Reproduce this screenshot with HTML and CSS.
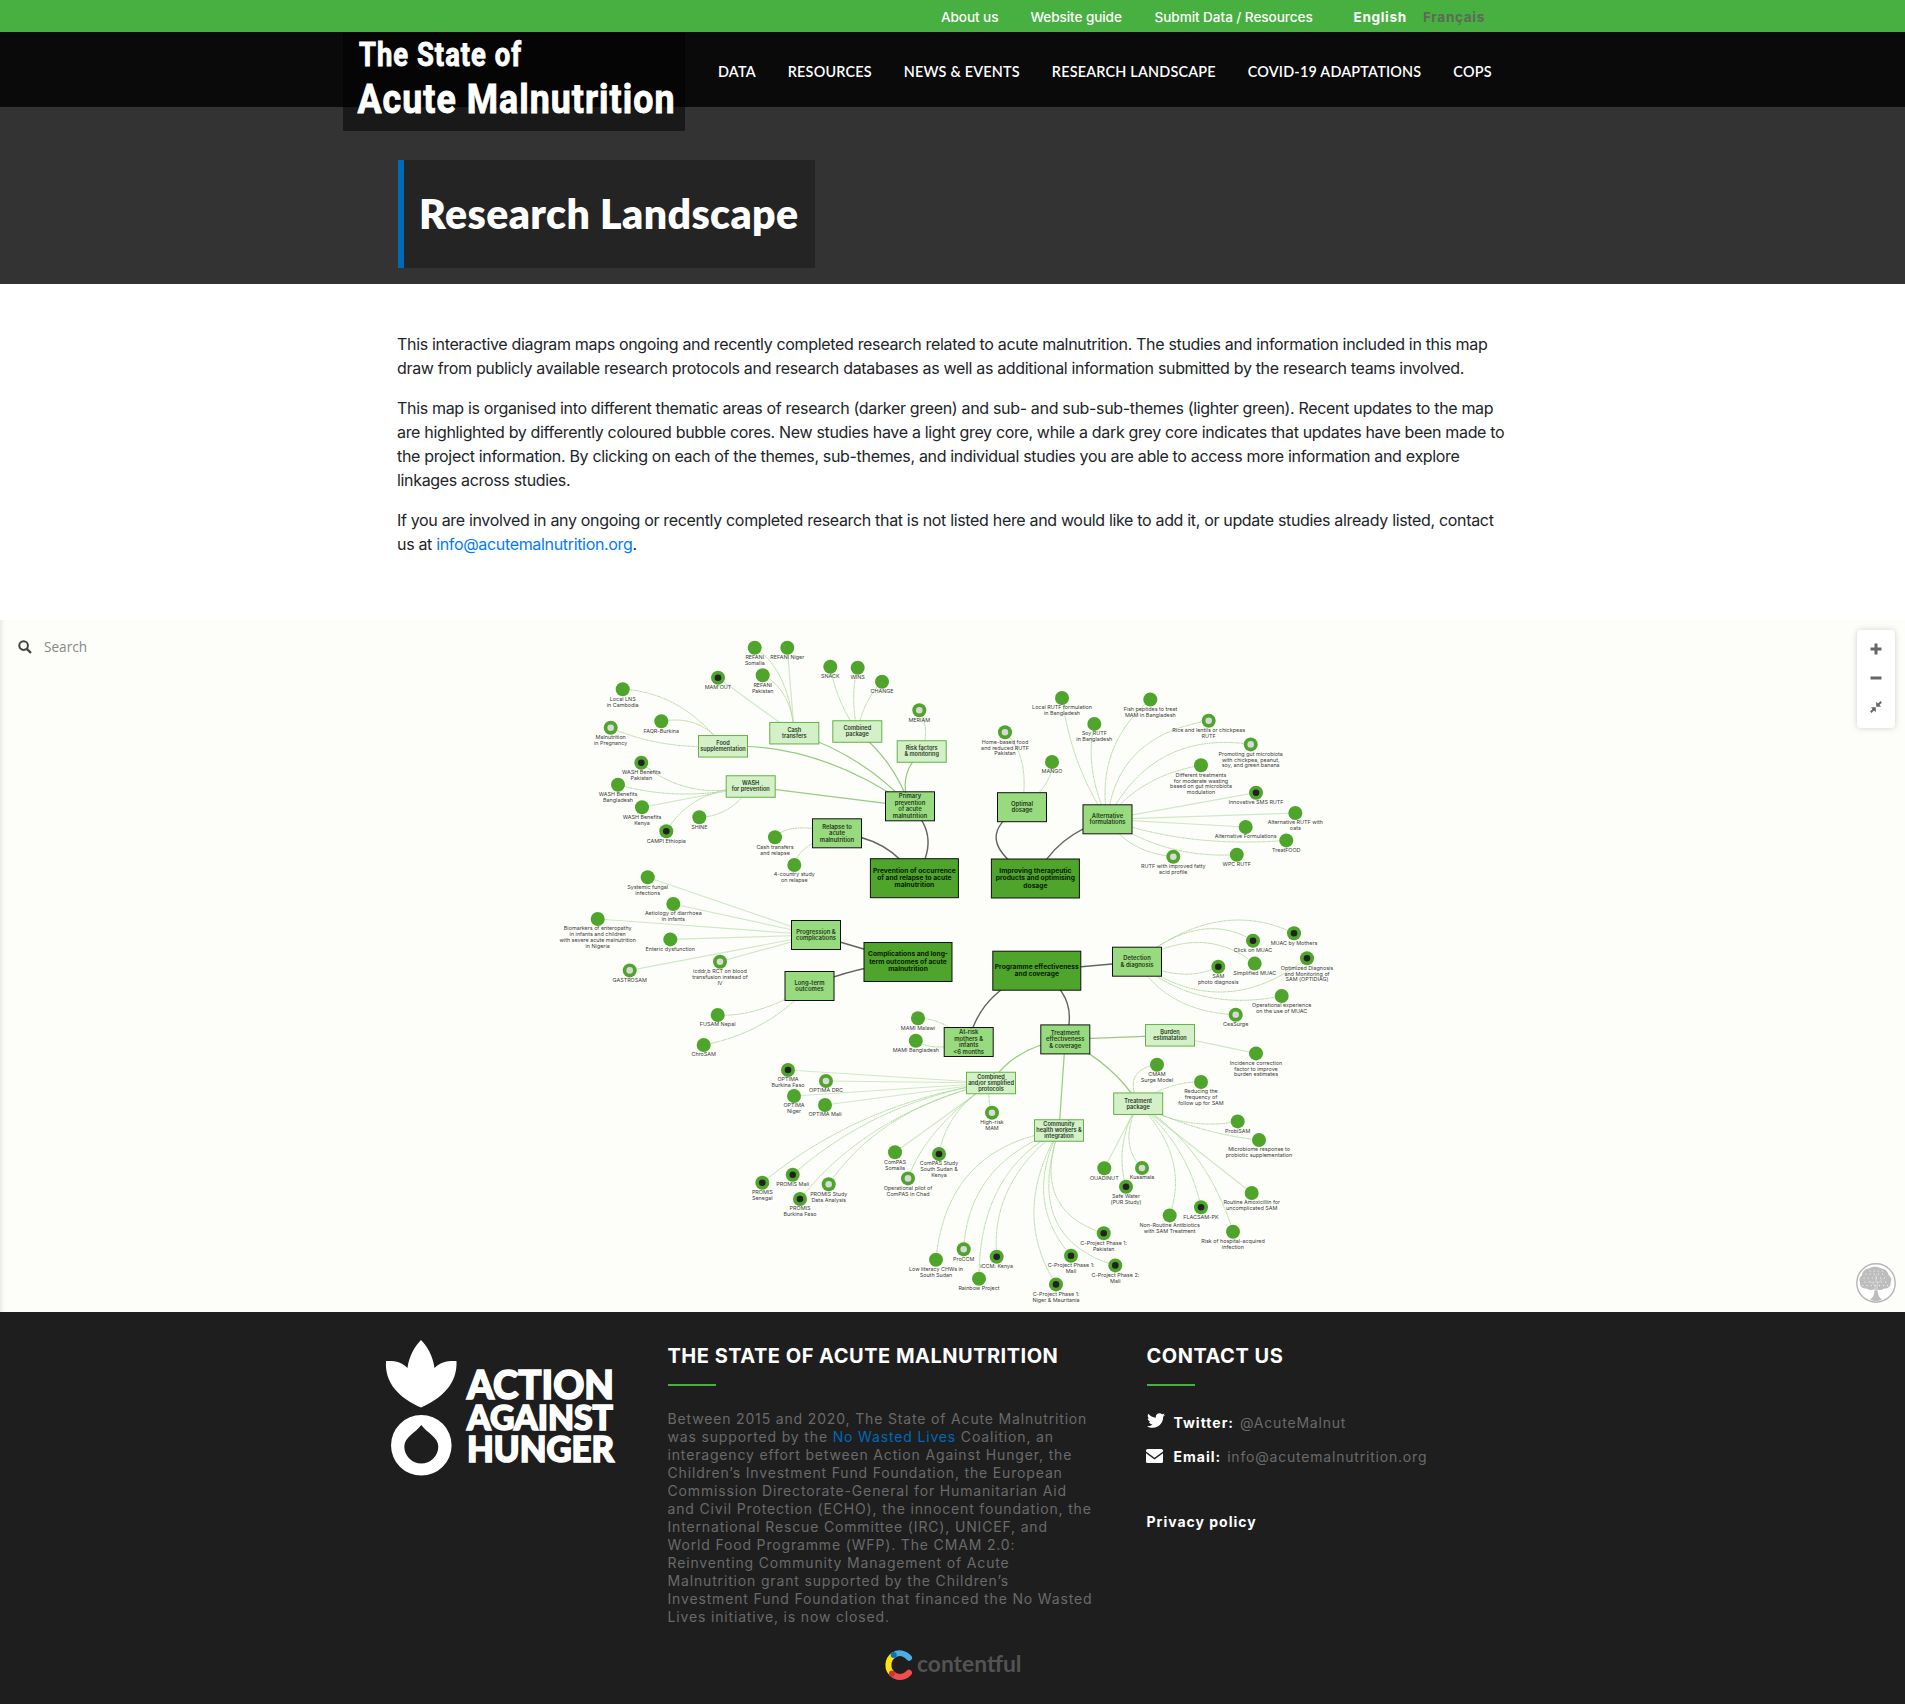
FILE: index.html
```html
<!DOCTYPE html>
<html lang="en">
<head>
<meta charset="utf-8">
<title>Research Landscape</title>
<link rel="stylesheet" href="styles.css">
</head>
<body>
<div class="topbar">
  <nav class="topbar-links">
    <a class="t-about">About us</a><a class="t-guide">Website guide</a><a class="t-submit">Submit Data / Resources</a>
    <a class="lang active">English</a><a class="lang other">Français</a>
  </nav>
</div>
<header class="header">
  <svg class="brand" width="342" height="99" viewBox="0 0 342 99" role="img">
    <text x="16" y="33.5" font-size="32.5" textLength="163" lengthAdjust="spacingAndGlyphs">The State of</text>
    <text x="14.500" y="80.5" font-size="41" textLength="318" lengthAdjust="spacingAndGlyphs">Acute Malnutrition</text>
  </svg>
  <nav class="main-nav">
    <a>DATA</a><a>RESOURCES</a><a>NEWS &amp; EVENTS</a><a>RESEARCH LANDSCAPE</a><a>COVID-19 ADAPTATIONS</a><a>COPS</a>
  </nav>
</header>
<section class="hero"><h1>Research Landscape</h1></section>
<section class="intro">
  <p>This interactive diagram maps ongoing and recently completed research related to acute malnutrition. The studies and information included in this map<br>draw from publicly available research protocols and research databases as well as additional information submitted by the research teams involved.</p>
  <p>This map is organised into different thematic areas of research (darker green) and sub- and sub-sub-themes (lighter green). Recent updates to the map<br>are highlighted by differently coloured bubble cores. New studies have a light grey core, while a dark grey core indicates that updates have been made to<br>the project information. By clicking on each of the themes, sub-themes, and individual studies you are able to access more information and explore<br>linkages across studies.</p>
  <p>If you are involved in any ongoing or recently completed research that is not listed here and would like to add it, or update studies already listed, contact<br>us at <a>info@acutemalnutrition.org</a>.</p>
</section>
<section class="map">
  <svg id="graph" class="graph" width="1905" height="692" viewBox="0 0 1905 692"></svg>
  <div class="search">
    <svg width="14" height="14" viewBox="0 0 14 14"><circle cx="5.6" cy="5.6" r="4.3" fill="none" stroke="#444" stroke-width="2"/><path d="M8.8 8.8L13 13" stroke="#444" stroke-width="2.4"/></svg>
    <span>Search</span>
  </div>
  <div class="zoom">
    <svg width="12" height="12" viewBox="0 0 12 12"><path d="M6 .5v11M.5 6h11" stroke="#666" stroke-width="3"/></svg>
    <svg width="12" height="12" viewBox="0 0 12 12"><path d="M.5 6h11" stroke="#666" stroke-width="3"/></svg>
    <svg width="12" height="12" viewBox="0 0 12 12"><path d="M.8 11.2L4 8M11.2.8L8 4" stroke="#666" stroke-width="2"/><path d="M5.8 6.2v5L.9 6.2zM6.2 5.8v-5l4.9 5z" fill="#666"/></svg>
  </div>
  <svg class="tree" width="40" height="40" viewBox="0 0 40 40">
    <circle cx="20" cy="20" r="19.2" fill="#fff" stroke="#b5b5b5" stroke-width="1.4"/>
    <path fill="#bdbdbd" d="M18.500 26c-3 1.500-6 1-8-.5-4 .5-7-2-6.500-6-1.500-3 0-6 2-7 0-4 4-7 7-7 3-2.500 9-2.500 12 0 4 0 7 3 7.500 6.500 3 2 3.500 5 2 8 .5 4-3 6-6.500 5.500-2 1.500-4 2-6.500 1 .3 4 .8 7.500 4.500 10-4 2.200-8 2.200-12 0 4-2.500 4.500-6 4.500-10.500z"/>
    <path fill="none" stroke="#e2e2e2" stroke-width=".7" d="M19.300 28l-.5-6-5-4M20.800 28l.5-7 5-5M20 20V12"/>
    <path fill="none" stroke="#fff" stroke-width="1.100" stroke-linecap="round" stroke-dasharray=".1 4" d="M8 15h24M9 19h24M10 11h20M7 22.500h26M14 8h14"/>
  </svg>
</section>
<footer class="footer">
  <div class="cols">
    <div class="col-logo">
      <svg width="240" height="150" viewBox="0 0 240 150" role="img">
        <g fill="#fff">
          <path d="M39 8c6 6 12 16 13.500 28C58 30 66 28.500 74.500 29 75.500 52 60 66 39 75.500 18 66 2.500 52 4 29c8.500-.5 16 1 21.500 7C27 24 33 14 39 8z"/>
          <path fill-rule="evenodd" d="M39.300 83a30.300 30.300 0 1 1 0 60.600 30.300 30.300 0 0 1 0-60.600zM39.300 93c-6 8-17 12-17 21.500a17 17 0 0 0 34 0C56.300 105 45 101 39.300 93z"/>
        </g>
        <g class="aah">
          <text x="85" y="66.800" font-size="39" textLength="147" lengthAdjust="spacingAndGlyphs">ACTION</text>
          <text x="85" y="97.800" font-size="34" textLength="146" lengthAdjust="spacingAndGlyphs">AGAINST</text>
          <text x="85" y="130.300" font-size="35.500" textLength="147" lengthAdjust="spacingAndGlyphs">HUNGER</text>
        </g>
      </svg>
    </div>
    <div class="col-about">
      <h2>THE STATE OF ACUTE MALNUTRITION</h2>
      <p>Between 2015 and 2020, The State of Acute Malnutrition<br>was supported by the <a>No Wasted Lives</a> Coalition, an<br>interagency effort between Action Against Hunger, the<br>Children’s Investment Fund Foundation, the European<br>Commission Directorate-General for Humanitarian Aid<br>and Civil Protection (ECHO), the innocent foundation, the<br>International Rescue Committee (IRC), UNICEF, and<br>World Food Programme (WFP). The CMAM 2.0:<br>Reinventing Community Management of Acute<br>Malnutrition grant supported by the Children’s<br>Investment Fund Foundation that financed the No Wasted<br>Lives initiative, is now closed.</p>
    </div>
    <div class="col-contact">
      <h2>CONTACT US</h2>
      <div class="contact"><svg width="18" height="15" viewBox="0 0 512 416"><path fill="#fff" d="M459 104c.3 4.500.3 9 .3 13.600C459.300 256 353.700 416 161 416 101.500 416 46.300 398.700 0 368.700c8.400 1 16.600 1.300 25.300 1.300 49 0 94.200-16.600 130.300-44.800-46-1-84.800-31.200-98-72.800 6.500 1 13 1.600 19.800 1.600 9.400 0 18.800-1.300 27.600-3.600C57 240.700 20.800 198.500 20.800 147.500v-1.300c14 7.800 30.200 12.700 47.400 13.300C40 140.700 21.400 108.500 21.400 72.100c0-19.500 5.200-37.400 14.300-53C87.400 82.800 165 124.400 252 129c-1.600-7.800-2.600-15.900-2.600-24C249.400 47 296.200 0 354.400 0c30.200 0 57.500 12.700 76.700 33.100 23.700-4.500 46.500-13.300 66.600-25.300-7.800 24.400-24.400 44.800-46.100 57.800 21-2.300 41.600-8.100 60.400-16.200-14.300 20.800-32.200 39.300-53 54.600z"/></svg><b>Twitter:</b> <span>@AcuteMalnut</span></div>
      <div class="contact mail"><svg width="17" height="14" viewBox="0 0 17 14"><path fill="#fff" d="M1.500 0h14A1.500 1.500 0 0 1 17 1.500v1L8.500 8.700 0 2.500v-1A1.500 1.500 0 0 1 1.500 0zM0 4.200l8.500 6.300L17 4.200v8.300a1.500 1.500 0 0 1-1.500 1.500h-14A1.500 1.500 0 0 1 0 12.500z"/></svg><b>Email:</b> <span>info@acutemalnutrition.org</span></div>
      <div class="privacy">Privacy policy</div>
    </div>
  </div>
  <svg class="contentful" width="142" height="32" viewBox="0 0 142 32">
    <g fill="none" stroke-width="6" stroke-linecap="round">
      <path stroke="#4fade1" d="M9.500 6.200C14.500 2.800 20.500 4 25 8.800"/>
      <path stroke="#ee4f4a" d="M8 24.500C12.500 29.500 20.500 29 25 23.700"/>
      <path stroke="#ffe30d" stroke-linecap="butt" d="M9.500 6.200C3 11 3 20 8 24.500"/>
    </g>
    <circle cx="9.700" cy="6" r="3" fill="#0474b4"/><circle cx="8" cy="24.500" r="3" fill="#c6373c"/>
    <text x="33" y="22.800" font-size="23" textLength="104.500" lengthAdjust="spacingAndGlyphs">contentful</text>
  </svg>
</footer>
<script src="graph.js"></script>
</body>
</html>
```
FILE: graph.js
```js
// Boxes: id -> [centre x, centre y, level, label]
const boxes = {
  prev: [914.4, 258.2, 'main', 'Prevention of occurrence|of and relapse to acute|malnutrition'],
  impr: [1035.4, 258.5, 'main', 'Improving therapeutic|products and optimising|dosage'],
  comp: [908, 342, 'main', 'Complications and long-|term outcomes of acute|malnutrition'],
  prog: [1036.8, 350.7, 'main', 'Programme effectiveness|and coverage'],
  primary: [910, 186.3, 'theme', 'Primary|prevention|of acute|malnutrition'],
  relapse: [837, 213.3, 'theme', 'Relapse to|acute|malnutrition'],
  optimal: [1022, 187.2, 'theme', 'Optimal|dosage'],
  alt: [1107.5, 199.3, 'theme', 'Alternative|formulations'],
  progress: [816, 315, 'theme', 'Progression &|complications'],
  longterm: [809.5, 366, 'theme', 'Long-term|outcomes'],
  detect: [1137, 341.7, 'theme', 'Detection|& diagnosis'],
  atrisk: [968.7, 422, 'theme', 'At-risk|mothers &|infants|<6 months'],
  treat: [1065.3, 419.4, 'theme', 'Treatment|effectiveness|& coverage'],
  food: [723, 126.3, 'sub', 'Food|supplementation'],
  cash: [794.3, 113.2, 'sub', 'Cash|transfers'],
  combo: [857.3, 111.5, 'sub', 'Combined|package'],
  risk: [921.7, 131.5, 'sub', 'Risk factors|& monitoring'],
  wash: [750.7, 166.5, 'sub', 'WASH|for prevention'],
  burden: [1170, 415.3, 'sub', 'Burden|estimatation'],
  simpl: [991, 463, 'sub', 'Combined|and/or simplified|protocols'],
  pack: [1138.2, 483.7, 'sub', 'Treatment|package'],
  chw: [1059, 510.5, 'sub', 'Community|health workers &|integration']
};

// Studies: [x, y, core, parent, label, curve mid-point x, y]
const studies = [
  [754.7, 27.7, '', 'cash', 'REFANI|Somalia', 781.7, 60],
  [787.3, 27.7, '', 'cash', 'REFANI Niger'],
  [718, 57.7, 'dark', 'cash', "MAM'OUT"],
  [762.7, 55.3, '', 'cash', 'REFANI|Pakistan', 785, 76.7],
  [830.3, 46.7, '', 'combo', 'SNACK', 840, 80],
  [857.7, 47.7, '', 'combo', 'WINS', 853.7, 77],
  [882, 61.7, '', 'combo', 'CHANGE', 866.7, 83],
  [919.3, 90.3, 'light', 'risk', 'MERIAM', 925.5, 110],
  [622.7, 69.3, '', 'food', 'Local LNS|in Cambodia', 677, 85],
  [661.3, 101.3, '', 'food', 'FAQR-Burkina', 696.7, 104],
  [610.7, 107.7, 'light', 'food', 'Malnutrition|in Pregnancy', 663.3, 123.3],
  [641.3, 142.7, 'dark', 'wash', 'WASH Benefits|Pakistan', 691, 168],
  [618, 164.7, '', 'wash', 'WASH Benefits|Bangladesh', 682, 174],
  [642, 187.3, '', 'wash', 'WASH Benefits|Kenya'],
  [666.3, 211.3, 'dark', 'wash', 'CAMPI Ethiopia', 700, 179],
  [699.3, 197.3, '', 'wash', 'SHINE', 728, 189],
  [775, 217.3, '', 'relapse', 'Cash transfers|and relapse', 798, 208],
  [794.3, 245, '', 'relapse', '4-country study|on relapse', 807, 227],
  [647.7, 257.3, '', 'progress', 'Systemic fungal|infections'],
  [1005, 112.3, 'light', 'optimal', 'Home-based food|and reduced RUTF|Pakistan', 1022, 143],
  [1052, 142, '', 'optimal', 'MANGO', 1045, 165],
  [1062, 78, '', 'alt', 'Local RUTF formulation|in Bangladesh', 1078.3, 143.3],
  [1094.3, 103.9, '', 'alt', 'Soy RUTF|in Bangladesh', 1092.5, 150],
  [1150.3, 79.5, '', 'alt', 'Fish peptides to treat|MAM in Bangladesh', 1111.7, 133.3],
  [1208.7, 100.7, 'light', 'alt', 'Rice and lentils or chickpeas|RUTF', 1137, 133],
  [1250.7, 124.4, 'light', 'alt', 'Promoting gut microbiota|with chickpea, peanut,|soy, and green banana', 1166, 136],
  [1201, 145.3, '', 'alt', 'Different treatments|for moderate wasting|based on gut microbiota|modulation', 1147, 164],
  [1256, 172.7, 'dark', 'alt', 'Innovative SMS RUTF'],
  [1295.3, 193, '', 'alt', 'Alternative RUTF with|oats'],
  [1245.7, 207, '', 'alt', 'Alternative Formulations'],
  [1286.3, 220.4, '', 'alt', 'TreatFOOD', 1192, 219],
  [1236.8, 234.7, '', 'alt', 'WPC RUTF', 1169, 228],
  [1173.3, 236.7, 'light', 'alt', 'RUTF with improved fatty|acid profile', 1134, 225],
  [673.3, 284, '', 'progress', 'Aetiology of diarrhoea|in infants'],
  [597.7, 299, '', 'progress', 'Biomarkers of enteropathy|in infants and children|with severe acute malnutrition|in Nigeria'],
  [670.3, 319.4, '', 'progress', 'Enteric dysfunction'],
  [629.7, 350.4, 'light', 'progress', 'GASTROSAM'],
  [720, 341.7, 'light', 'progress', 'icddr,b RCT on blood|transfusion instead of|IV'],
  [717.7, 395, '', 'longterm', 'FUSAM Nepal', 761, 389],
  [703.7, 425, '', 'longterm', 'ChroSAM', 762, 404],
  [918, 398.3, '', 'atrisk', 'MAMI Malawi', 943, 404],
  [915.8, 420.8, '', 'atrisk', 'MAMI Bangladesh', 938, 427],
  [788, 450, 'dark', 'simpl', 'OPTIMA|Burkina Faso'],
  [826, 461, 'light', 'simpl', 'OPTIMA DRC'],
  [794, 476, '', 'simpl', 'OPTIMA|Niger'],
  [825, 485, '', 'simpl', 'OPTIMA Mali'],
  [1294, 313.3, 'dark', 'detect', 'MUAC by Mothers', 1217, 302],
  [1253, 320.7, 'dark', 'detect', 'Click on MUAC', 1198, 310],
  [1254.7, 343.6, '', 'detect', 'Simplified MUAC', 1199, 322.5],
  [1307, 338.3, 'dark', 'detect', 'Optimized Diagnosis|and Monitoring of|SAM (OPTIDIAG)', 1222, 372],
  [1218.3, 346.7, 'dark', 'detect', 'SAM|photo diagnosis', 1181, 354],
  [1281.7, 376, '', 'detect', 'Operational experience|on the use of MUAC', 1203, 376],
  [1235.7, 394.7, 'light', 'detect', 'CeaSurge', 1177, 380],
  [1256, 433.4, '', 'burden', 'Incidence correction|factor to improve|burden estimates'],
  [1157, 444.7, '', 'pack', 'CMAM|Surge Model', 1135, 457],
  [1201, 462, '', 'pack', 'Reducing the|frequency of|follow up for SAM', 1169, 467],
  [992, 492.7, 'light', 'simpl', 'High-risk|MAM', 989, 478],
  [895, 532.3, '', 'simpl', 'ComPAS|Somalia'],
  [939, 534, 'dark', 'simpl', 'ComPAS Study|South Sudan &|Kenya', 956, 494],
  [908, 558.4, 'light', 'simpl', 'Operational pilot of|ComPAS in Chad', 938, 509],
  [762.3, 562.7, 'dark', 'simpl', 'PROMIS|Senegal', 868, 498],
  [792.7, 554.7, 'dark', 'simpl', 'PROMIS Mali', 884, 495],
  [828.7, 564.3, 'light', 'simpl', 'PROMIS Study|Data Analysis', 895, 501],
  [800, 579, 'dark', 'simpl', 'PROMIS|Burkina Faso', 882, 507],
  [936, 639.7, '', 'chw', 'Low literacy CHWs in|South Sudan', 972, 551],
  [963.7, 629.3, 'light', 'chw', 'ProCCM', 990, 556],
  [979, 658.7, '', 'chw', 'Rainbow Project', 999, 568],
  [996.7, 636.7, 'dark', 'chw', 'iCCM: Kenya', 1009, 568],
  [1237.7, 501.4, '', 'pack', 'ProbiSAM', 1186, 502],
  [1259, 520, '', 'pack', 'Microbiome response to|probiotic supplementation', 1197, 507.5],
  [1104.3, 548.3, '', 'pack', 'OUADINUT'],
  [1142, 548, 'light', 'pack', 'Kusamala', 1129, 520],
  [1126, 566.7, 'dark', 'pack', 'Safe Water|(PUR Study)', 1123, 525],
  [1169.7, 595.4, '', 'pack', 'Non-Routine Antibiotics|with SAM Treatment', 1172, 538],
  [1201, 587.3, 'dark', 'pack', 'FLACSAM-PK', 1179, 531],
  [1251.7, 573, '', 'pack', 'Routine Amoxicillin for|uncomplicated SAM'],
  [1233, 611.7, '', 'pack', 'Risk of hospital-acquired|infection', 1196, 537],
  [1103.7, 613.3, 'dark', 'chw', 'C-Project Phase 1:|Pakistan', 1056, 576],
  [1071, 635.7, 'dark', 'chw', 'C-Project Phase 1:|Mali', 1044, 577],
  [1115.3, 645.4, 'dark', 'chw', 'C-Project Phase 2:|Mali', 1055, 598],
  [1056, 664.4, 'dark', 'chw', 'C-Project Phase 1:|Niger & Mauritania', 1034, 590]
];

// Links between boxes: [from, to, mid-point x, y]
const links = [
  ['prev', 'primary', 928, 220], ['prev', 'relapse', 883.3, 226.7],
  ['impr', 'optimal', 996.5, 221], ['impr', 'alt', 1063.3, 221.7],
  ['comp', 'progress'], ['comp', 'longterm', 858, 350],
  ['prog', 'detect'], ['prog', 'atrisk', 991, 379], ['prog', 'treat', 1066, 380],
  ['primary', 'food', 817, 139], ['primary', 'cash', 856.7, 141.7],
  ['primary', 'combo', 889, 145], ['primary', 'risk', 906, 157],
  ['primary', 'wash'], ['treat', 'burden'], ['treat', 'simpl', 1021, 434],
  ['treat', 'chw'], ['treat', 'pack', 1109, 449]
];

const size = { main: [88, 39], theme: [49, 29], sub: [49, 21.5] };
const textStep = { main: 7.4, theme: 6.5, sub: 6 };
const esc = s => s.replace(/&/g, '&amp;').replace(/</g, '&lt;');

function path(a, b, mx, my, cls) {
  if (mx === undefined) return `<path class="edge ${cls} straight" d="M${a[0]} ${a[1]}L${b[0]} ${b[1]}"/>`;
  const cx = 2 * mx - (a[0] + b[0]) / 2, cy = 2 * my - (a[1] + b[1]) / 2;
  return `<path class="edge ${cls}" d="M${a[0]} ${a[1]}Q${cx} ${cy} ${b[0]} ${b[1]}"/>`;
}
function lines(label, x, y, step, cls) {
  return label.split('|').map((t, i) =>
    `<text class="${cls}" x="${x}" y="${y + i * step}">${esc(t)}</text>`).join('');
}

let out = '';
for (const s of studies) out += path(s, boxes[s[3]], s[5], s[6], 'leaf');
for (const l of links) out += path(boxes[l[0]], boxes[l[1]], l[2], l[3], boxes[l[0]][2]);
for (const b of Object.values(boxes)) {
  const [w, h] = size[b[2]], step = textStep[b[2]], n = b[3].split('|').length;
  out += `<rect class="box ${b[2]}" x="${b[0] - w / 2}" y="${b[1] - h / 2}" width="${w}" height="${h}"/>`;
  out += lines(b[3], b[0], b[1] - (n - 1) * step / 2 + 1.8, step, 'box-label ' + b[2]);
}
for (const s of studies) {
  out += `<circle class="study" cx="${s[0]}" cy="${s[1]}" r="7"/>`;
  if (s[2]) out += `<circle class="core ${s[2]}" cx="${s[0]}" cy="${s[1]}" r="3.3"/>`;
  out += lines(s[4], s[0], s[1] + 11.4, 5.8, 'label');
}
document.getElementById('graph').innerHTML = out;
```
FILE: styles.css
```css
* { box-sizing: border-box; }
body { margin: 0; background: #fff; font-family: Inter, "Liberation Sans", sans-serif; color: #212529; }
h1, h2, p { margin: 0; }

.topbar { height: 32px; background: #48b040; padding-left: 941px; }
.topbar-links { display: flex; align-items: center; height: 34px; color: #fff; font-size: 13.6px; font-weight: 500; white-space: nowrap; }
.topbar-links a { flex: none; }
.t-about { width: 89.5px; letter-spacing: -.1px; }
.t-guide { width: 124px; letter-spacing: -.1px; }
.t-submit { width: 199px; letter-spacing: -.07px; }
.lang { font-weight: 700; letter-spacing: .65px; }
.lang.active { width: 69.5px; }
.lang.other { color: #5c6b5a; }

.header { height: 75px; background: #0a0a0a; display: flex; padding-left: 343px; position: relative; }
.brand { flex: none; background: rgba(0, 0, 0, .5); }
.brand text { font-family: Roboto, sans-serif; font-weight: 700; letter-spacing: 1.2px; fill: #fff; stroke: #fff; stroke-width: .9; }
.main-nav { display: flex; gap: 32px; padding: 0 0 0 33px; height: 79px; align-items: center; color: #fff; font: 600 14.4px Lato, sans-serif; letter-spacing: .2px; white-space: nowrap; }

.hero { height: 177px; background: #333; padding: 53px 0 0 398px; }
.hero h1 { width: 417px; height: 108px; background: #242424; border-left: 6px solid #0069b8; padding-left: 15px; font: 800 41px/108px Lato, sans-serif; letter-spacing: .42px; color: #fff; white-space: nowrap; }

.intro { height: 336px; padding: 48px 0 0 397px; font-size: 16px; line-height: 24px; letter-spacing: -.33px; white-space: nowrap; }
.intro p { margin-bottom: 16px; }
.intro a { color: #007bff; }

.map { position: relative; height: 692px; background: #fdfef9; box-shadow: inset 5px 0 5px -4px rgba(0, 0, 0, .12); }
.graph { display: block; }
.edge { fill: none; }
.edge.leaf { stroke: #a9d498; stroke-width: .9; stroke-dasharray: 2 .5; }
.edge.leaf.straight { stroke: #d0e8c6; stroke-width: 1.2; stroke-dasharray: none; }
.edge.main { stroke: #636363; stroke-width: 1.4; }
.edge.theme { stroke: #94cb82; stroke-width: 1.2; }
.box { stroke-width: 1; }
.box.main { fill: #4fa52b; stroke: #111; }
.box.theme { fill: #98da7e; stroke: #111; }
.box.sub { fill: #d4f0c9; stroke: #62b344; }
.box-label { text-anchor: middle; font-size: 5.9px; font-weight: 600; fill: #263820; }
.box-label.main { font-size: 6.7px; font-weight: 700; fill: #0c1b05; }
.box-label.sub { font-size: 5.6px; }
.study { fill: #4fa52b; }
.core.dark { fill: #222; }
.core.light { fill: #d8d8d8; }
.label { text-anchor: middle; font-size: 5.4px; fill: #3c3c3c; }

.search { position: absolute; left: 18px; top: 17px; display: flex; align-items: center; gap: 12px; font: 13.6px/20px "Open Sans", sans-serif; color: #888; }
.zoom { position: absolute; left: 1857px; top: 10px; width: 38px; height: 98px; border-radius: 4px; background: #fff; box-shadow: 0 0 6px rgba(0, 0, 0, .18); display: flex; flex-direction: column; align-items: center; padding-top: 13px; gap: 17px; }
.tree { position: absolute; left: 1856px; top: 643px; }

.footer { height: 392px; background: #1e1e1e; color: #fff; }
.cols { display: flex; padding-left: 382px; height: 336px; white-space: nowrap; }
.col-logo { width: 285.5px; padding-top: 20px; flex: none; }
.aah text { font-family: Lato, sans-serif; font-weight: 900; fill: #fff; stroke: #fff; stroke-width: 1.6; }
.col-about { width: 479px; padding-top: 32px; flex: none; }
.col-contact { padding-top: 32px; font-size: 14px; letter-spacing: 1px; }
h2 { font-size: 20px; line-height: 24px; font-weight: 700; letter-spacing: .5px; }
h2::after { content: ""; display: block; width: 48px; height: 2px; background: #48b040; margin-top: 16px; }
.col-about p { margin-top: 24px; font-size: 14px; line-height: 18px; letter-spacing: .84px; color: #6a6a6a; }
.col-about a { color: #0069b8; }
.contact { display: flex; align-items: center; height: 20px; margin-top: 26px; }
.contact svg { margin-right: 9px; margin-top: -4px; }
.contact b { margin-right: 6px; }
.contact span { color: #6a6a6a; letter-spacing: .8px; }
.contact.mail { margin-top: 14px; margin-left: -1px; }
.contact.mail svg { margin-right: 11px; margin-top: 0; }
.privacy { font-weight: 700; line-height: 20px; margin-top: 46px; }
.contentful { display: block; margin-left: 884px; margin-top: 1px; }
.contentful text { font-family: Lato, sans-serif; font-weight: 700; fill: #535353; }
```
